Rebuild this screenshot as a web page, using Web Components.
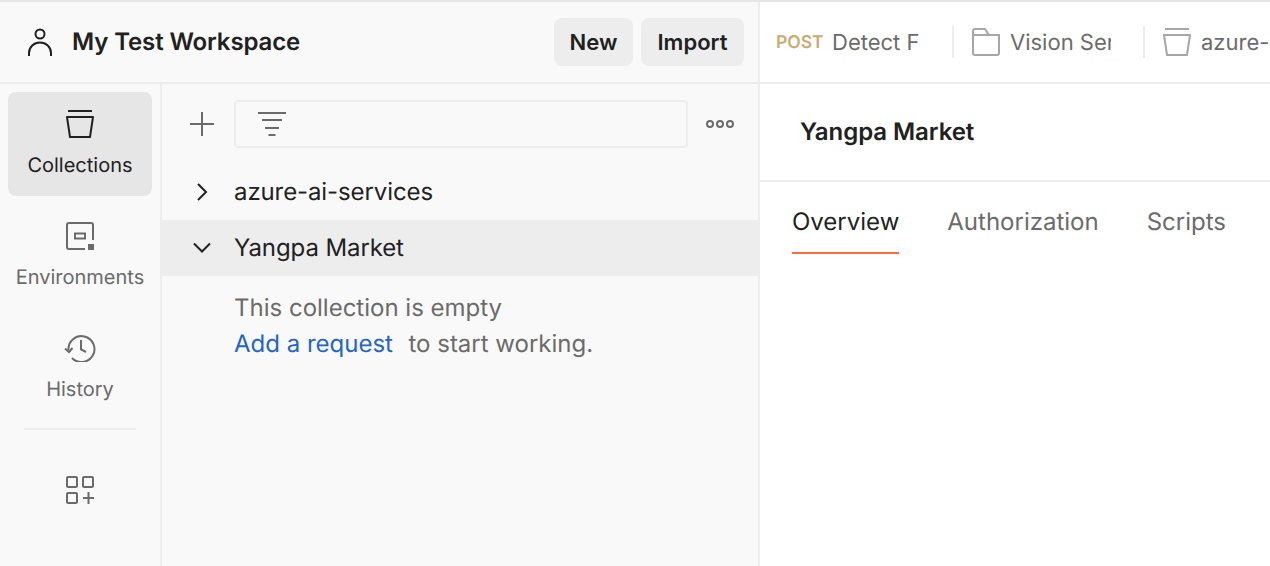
<!doctype html>
<html><head><meta charset="utf-8"><style>
html,body{margin:0;padding:0;height:566px;overflow:hidden;background:#fff}
body{font-family:Inter,"Liberation Sans",sans-serif;color:#212121;text-rendering:geometricPrecision;-webkit-font-smoothing:antialiased}
</style></head><body>
<pm-app></pm-app>
<template id="t-app"><style>
:host{display:flex;flex-direction:column;width:1270px;height:566px;overflow:hidden;border-top:2px solid #e6e6e6;box-sizing:border-box}
.cols{display:flex;flex:1;min-height:0}
.left{width:758px;flex:none;background:#f9f9f9;border-right:2px solid #ededed;display:flex;flex-direction:column}
.right{flex:1;min-width:0;display:flex;flex-direction:column;background:#fff}
.body{display:flex;flex:1;min-height:0}
</style><div class="cols"><div class="left"><pm-header></pm-header><div class="body"><pm-nav></pm-nav><pm-tree></pm-tree></div></div>
<div class="right"><pm-tabs></pm-tabs><pm-detail></pm-detail></div></div></template>

<template id="t-header"><style>
:host{display:flex;align-items:center;height:80px;border-bottom:2px solid #ededed;flex:none;padding:0 14px 0 26px}
svg{display:block;margin-right:18px}
h1{font:600 24px/32px Inter,sans-serif;margin:0;flex:1;color:#212121;letter-spacing:-.12px}
button{font:600 22px/28px Inter,sans-serif;color:#212121;background:#ededed;border:0;border-radius:8px;height:48px;padding:0;margin-left:8px}
.n{width:79px}.m{width:103px}
</style><svg width="28" height="28" viewBox="0 0 28 28" fill="none" stroke="#212121" stroke-width="2"><circle cx="14" cy="6" r="4.500"/><path d="M3 28v-3c0-6 5-10.500 11-10.500s11 4.500 11 10.500v3"/></svg>
<h1>My Test Workspace</h1><button class="n">New</button><button class="m">Import</button></template>

<template id="t-nav"><style>
:host{display:block;flex:none;border-right:2px solid #ededed;padding:8px 8px 0;width:144px}
hr{border:0;height:2px;background:#ededed;margin:4px 16px 0}
.apps{display:flex;justify-content:center;padding-top:46px}
svg{display:block}
</style><pm-navitem active label="Collections"><svg width="28" height="28" viewBox="0 0 28 28" fill="none" stroke="#212121" stroke-width="2"><path d="M2 1h24"/><path d="M1 7h26l-3 20H4z" stroke-linejoin="round"/></svg></pm-navitem>
<pm-navitem label="Environments"><svg width="28" height="28" viewBox="0 0 28 28" fill="none" stroke="#6b6b6b" stroke-width="2"><path d="M27 18V3a2 2 0 0 0-2-2H3a2 2 0 0 0-2 2v22a2 2 0 0 0 2 2h16"/><rect x="9" y="11.500" width="10" height="5"/><rect x="22" y="22" width="6" height="6" fill="#6b6b6b" stroke="none"/></svg></pm-navitem>
<pm-navitem label="History"><svg width="32" height="28" viewBox="0 0 32 28" fill="none" stroke="#6b6b6b" stroke-width="2"><path d="M4.500 16A13 13 0 1 1 8 24"/><path d="M1 14.500L5 18L8.500 14"/><path d="M17 6v9.500l5 2.500"/></svg></pm-navitem>
<hr>
<div class="apps"><svg width="28" height="28" viewBox="0 0 28 28" fill="none" stroke="#6b6b6b" stroke-width="2"><rect x="1" y="1" width="10" height="10" rx="1"/><rect x="17" y="1" width="10" height="10" rx="1"/><rect x="1" y="17" width="10" height="10" rx="1"/><path d="M22.500 16v12M17 22h11"/></svg></div></template>

<template id="t-navitem"><style>
:host{display:flex;flex-direction:column;align-items:center;height:104px;border-radius:8px;box-sizing:border-box;padding-top:18px;margin-bottom:8px;color:#6b6b6b}
:host([active]){background:#e6e6e6;color:#212121}
.i{height:28px;display:flex;justify-content:center}
.l{font:400 20px/28px Inter,sans-serif;margin-top:13px;white-space:nowrap}
</style><div class="i"><slot></slot></div><div class="l"></div></template>

<template id="t-tree"><style>
:host{display:block;flex:1;min-width:0}
.bar{display:flex;align-items:center;height:48px;margin-top:16px;padding:0 22px 0 28px}
.box{width:454px;height:48px;box-sizing:border-box;border:2px solid #ededed;border-radius:4px;margin-left:20px;padding:10px 0 0 22px;flex:none}
.dots{margin-left:18px}
svg{display:block;flex:none}
.rows{margin-top:16px}
.row{display:flex;align-items:center;height:56px;font:400 24px/32px Inter,sans-serif;color:#212121;padding-left:32px;letter-spacing:-.1px}
.row.sel{background:#ededed}
.row span{margin-left:24px}
.empty{padding:14px 0 0 72px;font:400 24px/36px Inter,sans-serif;color:#6b6b6b}
a{color:#2364c9;text-decoration:none;margin-right:15.500px}
</style><div class="bar"><svg width="24" height="24" viewBox="0 0 24 24" stroke="#6b6b6b" stroke-width="2"><path d="M12 0v24M0 12h24"/></svg>
<div class="box"><svg width="28" height="24" viewBox="0 0 28 24" stroke="#6b6b6b" stroke-width="2"><path d="M0 1h28M4 8h20M7 16h14M10.500 23h7"/></svg></div>
<svg class="dots" width="28" height="8" viewBox="0 0 28 8" fill="none" stroke="#6b6b6b" stroke-width="2"><circle cx="4" cy="4" r="3"/><circle cx="14" cy="4" r="3"/><circle cx="24" cy="4" r="3"/></svg></div>
<div class="rows"><div class="row"><svg width="16" height="20" viewBox="0 0 16 20" fill="none" stroke="#212121" stroke-width="2"><path d="M4 2l8 8-8 8"/></svg><span>azure-ai-services</span></div>
<div class="row sel"><svg width="20" height="12" viewBox="0 0 20 12" fill="none" stroke="#212121" stroke-width="2" style="margin-left:-2px"><path d="M2 1.500l8 8 8-8"/></svg><span style="margin-left:22px">Yangpa Market</span></div>
<div class="empty">This collection is empty<br><a>Add a request</a>to start working.</div></div></template>

<template id="t-tabs"><style>
:host{display:flex;align-items:center;height:80px;border-bottom:2px solid #ededed;flex:none;overflow:hidden;padding-left:16px;font:400 22px/32px Inter,sans-serif;color:#6b6b6b;white-space:nowrap}
.tab{display:flex;align-items:center;flex:none}
.post{font:600 17.500px/24px Inter,sans-serif;color:#c9ac73;width:56px;flex:none;padding-top:2px}
.clip{display:block;overflow:hidden;padding-top:2px}
.sep{width:2px;height:32px;background:#ededed;flex:none;margin:0 18px 0 33px}
svg{display:block;flex:none;margin-right:10px}
</style><div class="tab"><span class="post">POST</span><span class="clip" style="width:87px">Detect Faces</span></div><div class="sep"></div>
<div class="tab"><svg width="28" height="28" viewBox="0 0 28 28" fill="none" stroke="#a6a6a6" stroke-width="2"><path d="M1 25V3a2 2 0 0 1 2-2h10l4 6h10v18a2 2 0 0 1-2 2H3a2 2 0 0 1-2-2zM1 7h16"/></svg><span class="clip" style="width:101px;margin-right:-1px">Vision Services</span></div><div class="sep"></div>
<div class="tab"><svg width="28" height="28" viewBox="0 0 28 28" fill="none" stroke="#a6a6a6" stroke-width="2"><path d="M2 1h24"/><path d="M1 7h26l-3 20H4z" stroke-linejoin="round"/></svg><span class="clip">azure-ai-services</span></div></template>

<template id="t-detail"><style>
:host{display:block;flex:1}
.head{height:96px;border-bottom:2px solid #ededed;display:flex;align-items:center;padding-left:40px;font:600 24px/32px Inter,sans-serif;color:#212121;letter-spacing:-.06px}
.tabs{display:flex;padding-left:32px;gap:48px}
.t{font:400 24px/32px Inter,sans-serif;color:#6b6b6b;height:72px;box-sizing:border-box;padding-top:24px;white-space:nowrap}
.t.on{color:#212121;border-bottom:2px solid #ff6c37}
</style><div class="head">Yangpa Market</div><div class="tabs"><div class="t on">Overview</div><div class="t">Authorization</div><div class="t">Scripts</div></div></template>

<script>
function tpl(id){return document.getElementById(id).content.cloneNode(true);}
class Base extends HTMLElement{constructor(){super();this.attachShadow({mode:"open"}).appendChild(tpl(this.constructor.tid));}}
class NavItem extends Base{static tid="t-navitem";connectedCallback(){this.shadowRoot.querySelector(".l").textContent=this.getAttribute("label");}}
customElements.define("pm-navitem",NavItem);
for(const n of ["header","nav","tree","tabs","detail","app"]){customElements.define("pm-"+n,class extends Base{static tid="t-"+n;});}
</script></body></html>
